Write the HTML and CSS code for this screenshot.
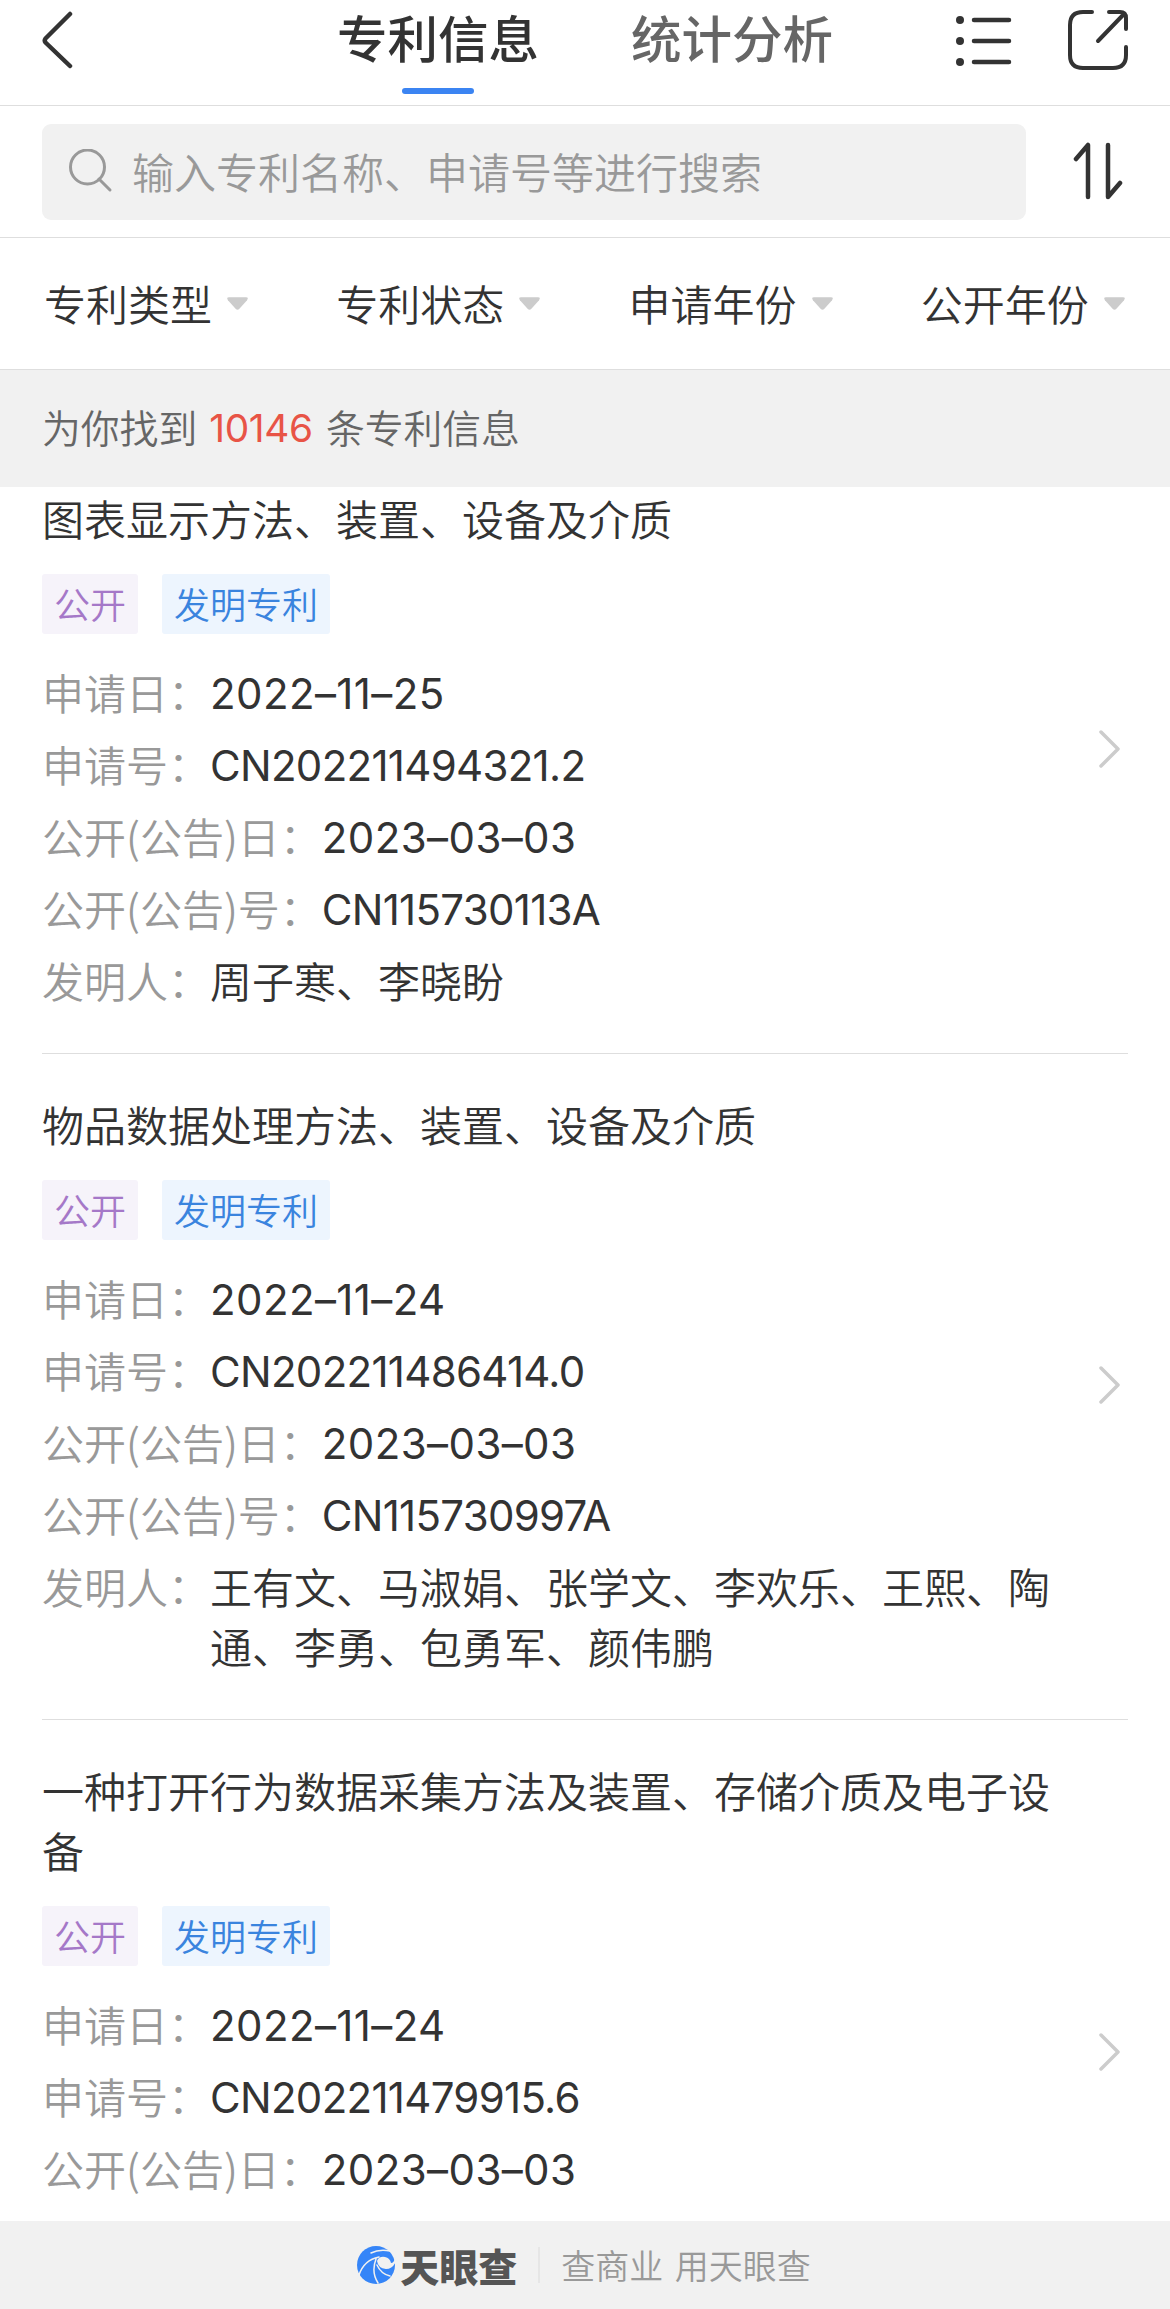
FILE: index.html
```html
<!DOCTYPE html>
<html lang="zh-CN">
<head>
<meta charset="UTF-8" />
<meta name="viewport" content="width=device-width, initial-scale=1" />
<title>专利信息</title>
<link rel="stylesheet" href="styles.css">
</head>
<body>
  <div class="page">
    <header class="nav">
      <svg class="back" viewBox="0 0 32 58"><path d="M29 3 L4.500 27.500 Q3 29.500 4.500 31.500 L29 55" /></svg>
      <div class="tabs">
        <div class="tab active">专利信息</div>
        <div class="tab">统计分析</div>
      </div>
      <div class="nav-icons">
        <svg class="icon-list" viewBox="0 0 56 50">
          <circle cx="4" cy="4" r="4" /><circle cx="4" cy="25" r="4" /><circle cx="4" cy="46" r="4" />
          <path d="M18 4H53M18 25H53M18 46H53" />
        </svg>
        <svg class="icon-share" viewBox="0 0 60 60">
          <path d="M24 2H15Q2 2 2 15V45Q2 58 15 58H45Q58 58 58 45V37" />
          <path d="M41 2H52Q58 2 58 8V19M56 4L30 31" />
        </svg>
      </div>
    </header>

    <div class="search-bar">
      <div class="search-box">
        <svg class="icon-search" viewBox="0 0 44 44"><circle cx="18.500" cy="18" r="17" /><path d="M30 30L41 41" /></svg>
        <span>输入专利名称、申请号等进行搜索</span>
      </div>
      <svg class="icon-sort" viewBox="0 0 50 58"><path d="M3 17L15 3V55M35 3V55L47 41" /></svg>
    </div>

    <div class="filters">
      <div class="filter"><span>专利类型</span><svg class="caret" viewBox="0 0 22 13"><path d="M2 0H20Q23 0 21 3L13 12Q11 14 9 12L1 3Q-1 0 2 0Z" /></svg></div>
      <div class="filter"><span>专利状态</span><svg class="caret" viewBox="0 0 22 13"><path d="M2 0H20Q23 0 21 3L13 12Q11 14 9 12L1 3Q-1 0 2 0Z" /></svg></div>
      <div class="filter"><span>申请年份</span><svg class="caret" viewBox="0 0 22 13"><path d="M2 0H20Q23 0 21 3L13 12Q11 14 9 12L1 3Q-1 0 2 0Z" /></svg></div>
      <div class="filter"><span>公开年份</span><svg class="caret" viewBox="0 0 22 13"><path d="M2 0H20Q23 0 21 3L13 12Q11 14 9 12L1 3Q-1 0 2 0Z" /></svg></div>
    </div>

    <div class="summary"><span>为你找到</span><span class="count num">10146</span><span>条专利信息</span></div>

    <main class="list">
      <div class="card">
        <div class="card-body">
          <h2>图表显示方法、装置、设备及介质</h2>
          <div class="tags"><span class="tag open">公开</span><span class="tag type">发明专利</span></div>
          <div class="row"><span class="label">申请日：</span><span class="num date">2022–11–25</span></div>
          <div class="row"><span class="label">申请号：</span><span class="num">CN202211494321.2</span></div>
          <div class="row"><span class="label">公开(公告)日：</span><span class="num date">2023–03–03</span></div>
          <div class="row"><span class="label">公开(公告)号：</span><span class="num">CN115730113A</span></div>
          <div class="row"><span class="label">发明人：</span><span>周子寒、李晓盼</span></div>
        </div>
        <svg class="chevron" viewBox="0 0 22 38"><path d="M2 2L19 19L2 36" /></svg>
      </div>

      <div class="card">
        <div class="card-body">
          <h2>物品数据处理方法、装置、设备及介质</h2>
          <div class="tags"><span class="tag open">公开</span><span class="tag type">发明专利</span></div>
          <div class="row"><span class="label">申请日：</span><span class="num date">2022–11–24</span></div>
          <div class="row"><span class="label">申请号：</span><span class="num">CN202211486414.0</span></div>
          <div class="row"><span class="label">公开(公告)日：</span><span class="num date">2023–03–03</span></div>
          <div class="row"><span class="label">公开(公告)号：</span><span class="num">CN115730997A</span></div>
          <div class="row"><span class="label">发明人：</span><span>王有文、马淑娟、张学文、李欢乐、王熙、陶通、李勇、包勇军、颜伟鹏</span></div>
        </div>
        <svg class="chevron" viewBox="0 0 22 38"><path d="M2 2L19 19L2 36" /></svg>
      </div>

      <div class="card">
        <div class="card-body">
          <h2>一种打开行为数据采集方法及装置、存储介质及电子设备</h2>
          <div class="tags"><span class="tag open">公开</span><span class="tag type">发明专利</span></div>
          <div class="row"><span class="label">申请日：</span><span class="num date">2022–11–24</span></div>
          <div class="row"><span class="label">申请号：</span><span class="num">CN202211479915.6</span></div>
          <div class="row"><span class="label">公开(公告)日：</span><span class="num date">2023–03–03</span></div>
        </div>
        <svg class="chevron" viewBox="0 0 22 38"><path d="M2 2L19 19L2 36" /></svg>
      </div>
    </main>

    <footer class="footer">
      <svg class="logo" viewBox="0 0 38 38">
        <circle cx="19" cy="19" r="19" class="logo-disc" />
        <path d="M39 15Q36 23 29 23Q21 22 20 15Q22 10 28 11Q33 12 34 17Q37 17 38 12Z" class="logo-eye" />
        <path d="M33 5Q22 3 14 7M22 11Q7 14 2 29M19 13Q14 26 21 37M20 19Q24 28 33 30" />
      </svg>
      <span class="brand">天眼查</span>
      <span class="bar"></span>
      <span class="slogan">查商业 用天眼查</span>
    </footer>
  </div>
</body>
</html>
```
FILE: styles.css
```css
* {
  box-sizing: border-box;
}
body {
  margin: 0;
  background: #fff;
  color: #333;
  font-family: "Noto Sans CJK SC", sans-serif;
  font-size: 42px;
  font-weight: 350;
  line-height: 60px;
}
svg {
  display: block;
  flex: none;
  fill: none;
  stroke: #333;
  stroke-width: 4.5;
  stroke-linecap: round;
  stroke-linejoin: round;
}
.page {
  height: 2309px;
  display: flex;
  flex-direction: column;
  overflow: hidden;
}
.num {
  margin: 2px 0 -2px;
  font-family: Inter, "Noto Sans CJK SC", sans-serif;
  font-weight: 400;
  letter-spacing: -0.7px;
}
.num.date {
  letter-spacing: 0.4px;
}

/* Top navigation */
.nav {
  height: 106px;
  flex: none;
  display: grid;
  grid-template-columns: 296px 1fr 214px;
  border-bottom: 1px solid #dedede;
}
.back {
  width: 32px;
  height: 58px;
  margin: 11px 0 0 41px;
}
.tabs {
  display: flex;
  gap: 92px;
  padding-left: 41px;
}
.tab {
  height: 94px;
  padding-top: 6px;
  font-size: 50.5px;
  font-weight: 500;
  color: #666;
  white-space: nowrap;
}
.tab.active {
  color: #333;
}
.tab.active::after {
  content: "";
  display: block;
  width: 72px;
  height: 6px;
  margin: 22px auto 0;
  border-radius: 3px;
  background: #3b84f2;
}
.nav-icons {
  display: flex;
  gap: 56px;
}
.icon-list {
  width: 56px;
  height: 50px;
  margin-top: 16px;
}
.icon-list circle {
  fill: #333;
  stroke: none;
}
.icon-share {
  width: 60px;
  height: 60px;
  margin-top: 10px;
  stroke-width: 4;
}

/* Search */
.search-bar {
  height: 132px;
  flex: none;
  display: flex;
  align-items: center;
  gap: 47px;
  padding: 0 42px;
  border-bottom: 1px solid #dedede;
}
.search-box {
  width: 984px;
  height: 96px;
  display: flex;
  align-items: center;
  gap: 19px;
  padding: 0 0 2px 27px;
  border-radius: 9px;
  background: #f1f1f1;
  color: #999;
}
.icon-search {
  width: 44px;
  height: 44px;
  stroke: #999;
  stroke-width: 3;
}
.icon-sort {
  width: 50px;
  height: 58px;
  margin-bottom: 2px;
}

/* Filters */
.filters {
  height: 132px;
  flex: none;
  display: grid;
  grid-template-columns: repeat(4, 1fr);
  padding-right: 1px;
  border-bottom: 1px solid #dedede;
}
.filter {
  display: flex;
  align-items: center;
  justify-content: center;
  gap: 15px;
}
.filter span {
  margin-bottom: 2px;
}
.caret {
  width: 21px;
  height: 13px;
  fill: #ccc;
  stroke: none;
}

.summary {
  height: 117px;
  flex: none;
  display: flex;
  align-items: center;
  padding: 0 0 5px 42px;
  background: #f1f1f1;
  color: #666;
  font-size: 38.8px;
}
.summary .count {
  margin: 3px 13px 0 12px;
  letter-spacing: -0.3px;
  color: #e85446;
}

/* Patent list */
.list {
  flex: 1;
  min-height: 0;
  overflow: hidden;
  padding: 0 42px;
}
.card {
  display: flex;
  align-items: center;
  justify-content: space-between;
  padding: 40px 7px 43px 0;
  border-bottom: 1px solid #dedede;
}
.card:first-child {
  margin-top: -39px;
}
.card:last-child {
  height: 667px;
}
.card:last-child .card-body {
  align-self: flex-start;
}
.card-body {
  width: 1010px;
}
.card h2 {
  margin: 0;
  font-size: 42px;
  font-weight: 350;
}
.tags {
  display: flex;
  gap: 24px;
  margin: 26px 0 28px;
}
.tag {
  height: 60px;
  padding: 0 12px;
  border-radius: 3px;
  font-size: 36px;
  line-height: 58px;
}
.tag.open {
  background: #f6f3fa;
  color: #a578c8;
}
.tag.type {
  background: #edf5fe;
  color: #3a84de;
}
.row {
  display: flex;
}
.row + .row {
  margin-top: 12px;
}
.label {
  flex: none;
  color: #999;
}
.chevron {
  width: 22px;
  height: 38px;
  stroke: #ccc;
  stroke-width: 3.5;
}

/* Bottom banner */
.footer {
  height: 88px;
  flex: none;
  display: flex;
  align-items: center;
  justify-content: center;
  padding-right: 2px;
  background: #f1f1f1;
}
.logo {
  width: 38px;
  height: 38px;
  margin-right: 5px;
  stroke: #f1f1f1;
  stroke-width: 1.5;
}
.logo-disc {
  fill: #3585f8;
  stroke: none;
}
.logo-eye {
  fill: #f1f1f1;
  stroke: none;
}
.brand {
  font-size: 39px;
  font-weight: 900;
  color: #555;
}
.bar {
  width: 2px;
  height: 36px;
  margin: 0 21px;
  background: #e6e6e6;
}
.slogan {
  font-size: 34px;
  word-spacing: 4px;
  color: #999;
}
```
